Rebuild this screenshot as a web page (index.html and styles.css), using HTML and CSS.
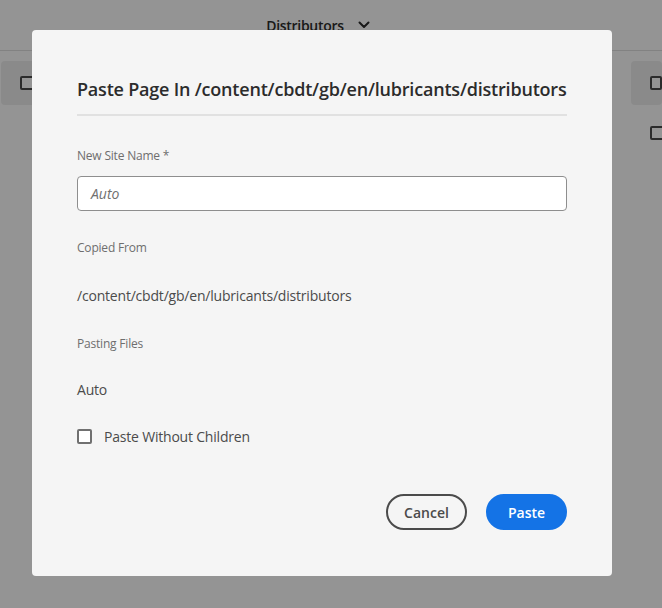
FILE: index.html
```html
<!DOCTYPE html>
<html>
<head>
<meta charset="utf-8">
<link rel="stylesheet" href="styles.css">
</head>
<body>
<div class="page">
  <header class="topbar">
    <span class="crumb">Distributors</span>
    <svg class="chev" width="12" height="8" viewBox="0 0 12 8"><path d="M1.5 1.5 L6 6 L10.5 1.5" fill="none" stroke="#2c2c2c" stroke-width="2" stroke-linecap="round" stroke-linejoin="round"/></svg>
  </header>
  <div class="cards">
    <div class="card card-left"><span class="cb"></span></div>
    <div class="card card-right"><span class="cb"></span></div>
  </div>
  <div class="cb cb-lone"></div>
</div>
<div class="overlay"></div>
<div class="dialog">
  <h1 class="title">Paste Page In /content/cbdt/gb/en/lubricants/distributors</h1>
  <div class="divider"></div>
  <label class="lbl">New Site Name *</label>
  <div class="input"><span class="placeholder">Auto</span></div>
  <div class="lbl lbl-2">Copied From</div>
  <div class="val">/content/cbdt/gb/en/lubricants/distributors</div>
  <div class="lbl lbl-3">Pasting Files</div>
  <div class="val val-2">Auto</div>
  <div class="check-row"><span class="box"></span><span class="check-text">Paste Without Children</span></div>
  <div class="actions">
    <button class="btn btn-cancel">Cancel</button>
    <button class="btn btn-paste">Paste</button>
  </div>
</div>
</body>
</html>
```
FILE: styles.css
```css
html, body { margin: 0; padding: 0; }
body {
  width: 662px; height: 608px; overflow: hidden; position: relative;
  font-family: "Open Sans", "Noto Sans", sans-serif;
  background: #ffffff;
}
.page { width: 662px; height: 608px; }
.topbar {
  height: 51px; border-bottom: 1px solid #e1e1e1;
  display: flex; align-items: center; justify-content: center; gap: 14px;
  padding-right: 26px; box-sizing: border-box;
}
.crumb { font-size: 14px; font-weight: 600; color: #2c2c2c; letter-spacing: -0.3px; }
.cards { display: flex; justify-content: space-between; padding: 10px 0 0 1px; }
.card { height: 44px; background: #eeeeee; border-radius: 4px; display: flex; align-items: center; }
.card-left { width: 80px; padding-left: 19px; box-sizing: border-box; }
.card-right { width: 31px; padding-left: 19px; box-sizing: border-box; }
.cb { display: inline-block; width: 14px; height: 14px; border: 2px solid #4b4b4b; border-radius: 2px; box-sizing: border-box; background: #fff; }
.cb-lone { position: absolute; left: 650px; top: 126px; }
.overlay { position: absolute; inset: 0; background: rgba(0,0,0,0.42); }
.dialog {
  position: absolute; left: 32px; top: 30px; width: 580px; height: 546px;
  background: #f5f5f5; border-radius: 4px; box-sizing: border-box;
  padding: 46px 45px 0 45px;
}
.title { margin: 0; font-size: 18px; font-weight: 600; color: #2c2c2c; line-height: 26px; letter-spacing: -0.2px; white-space: nowrap; }
.divider { height: 2px; background: #e1e1e1; margin-top: 12px; }
.lbl { display: block; font-size: 12px; color: #6e6e6e; line-height: 16px; margin-top: 32px; letter-spacing: -0.2px; }
.input {
  margin-top: 12px; height: 35px; background: #fff; border: 1px solid #8e8e8e; border-radius: 4px;
  box-sizing: border-box; display: flex; align-items: center; padding-left: 13px;
}
.placeholder { font-style: italic; font-size: 14px; color: #707070; }
.lbl-2 { margin-top: 29px; }
.val { font-size: 14px; color: #4b4b4b; line-height: 20px; margin-top: 30px; letter-spacing: -0.2px; }
.lbl-3 { margin-top: 30px; }
.val-2 { margin-top: 28px; }
.check-row { display: flex; align-items: center; margin-top: 27px; gap: 12px; }
.box { width: 15px; height: 15px; border: 2px solid #707070; border-radius: 2px; box-sizing: border-box; background: #fff; }
.check-text { font-size: 14px; color: #4b4b4b; letter-spacing: -0.2px; }
.actions { display: flex; justify-content: flex-end; gap: 19px; margin-top: 48px; }
.btn { height: 36px; border-radius: 18px; font-family: inherit; font-size: 14px; font-weight: 600; box-sizing: border-box; padding: 0; }
.btn-cancel { width: 81px; background: transparent; border: 2px solid #4b4b4b; color: #4b4b4b; }
.btn-paste { width: 81px; background: #1473e6; border: 2px solid #1473e6; color: #fff; }
```
